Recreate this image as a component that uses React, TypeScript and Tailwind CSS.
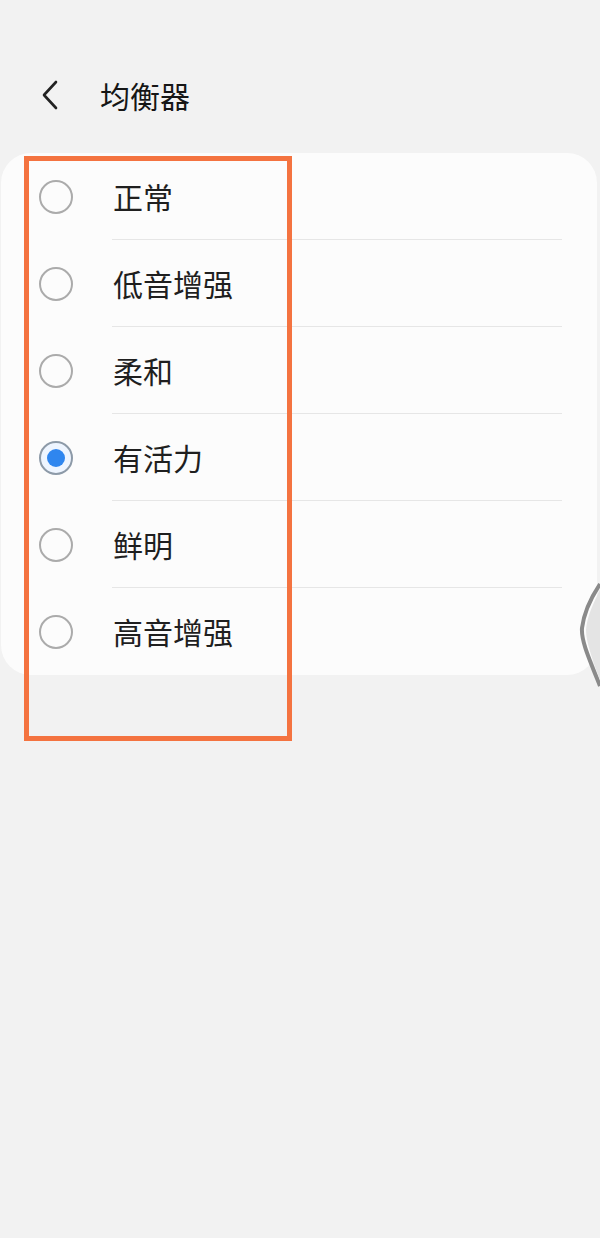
import React from "react"

const options = [
  { label: "正常", checked: false },
  { label: "低音增强", checked: false },
  { label: "柔和", checked: false },
  { label: "有活力", checked: true },
  { label: "鲜明", checked: false },
  { label: "高音增强", checked: false },
]

const font = { fontFamily: '"Noto Sans CJK SC", "Noto Sans", sans-serif' }

function Radio({ checked }: { checked: boolean }) {
  if (checked) {
    return (
      <div className="w-[34px] h-[34px] rounded-full border-2 border-[#8d9aa8] bg-[#eef5ff] flex items-center justify-center">
        <div className="w-[18px] h-[18px] rounded-full bg-[#2f86ef]" />
      </div>
    )
  }
  return <div className="w-[34px] h-[34px] rounded-full border-2 border-[#ababab]" />
}

export default function App() {
  return (
    <div className="relative w-[600px] h-[1238px] bg-[#f2f2f2] overflow-hidden" style={font}>
      {/* Header */}
      <div className="flex items-start h-[153px] pt-[80px] pl-[40px]">
        <svg width="20" height="30" viewBox="0 0 20 30" className="text-[#222]">
          <path d="M16 2 L4 15 L16 28" fill="none" stroke="currentColor" strokeWidth="2.6" strokeLinecap="round" strokeLinejoin="round" />
        </svg>
        <span className="ml-[40px] text-[30px] leading-[30px] text-[#161616]">均衡器</span>
      </div>

      {/* Options card */}
      <div className="ml-[1px] mr-[3px] bg-[#fcfcfc] rounded-[30px]">
        {options.map((o, i) => (
          <div key={o.label} className="flex h-[87px]">
            <div className="w-[111px] pl-[38px] flex items-center">
              <Radio checked={o.checked} />
            </div>
            <div
              className={`flex-1 mr-[35px] pl-[1px] flex items-center text-[30px] text-[#1f1f1f] ${
                i < options.length - 1 ? "border-b border-[#e6e6e6]" : ""
              }`}
            >
              {o.label}
            </div>
          </div>
        ))}
      </div>

      {/* Edge handle */}
      <svg className="absolute right-0 top-[580px]" width="22" height="112" viewBox="0 0 22 112">
        <path d="M22 4 C14 16 6 32 4 48 C3 60 10 76 22 106" fill="none" stroke="#8a8a8a" strokeWidth="4" />
        <path d="M22 10 C16 22 9 36 8 50 C8 62 14 78 22 100" fill="#e4e4e4" stroke="none" />
      </svg>

      {/* Highlight frame */}
      <div className="absolute left-[24px] top-[156px] w-[268px] h-[585px] border-[5px] border-[#f47340]" />
    </div>
  )
}
